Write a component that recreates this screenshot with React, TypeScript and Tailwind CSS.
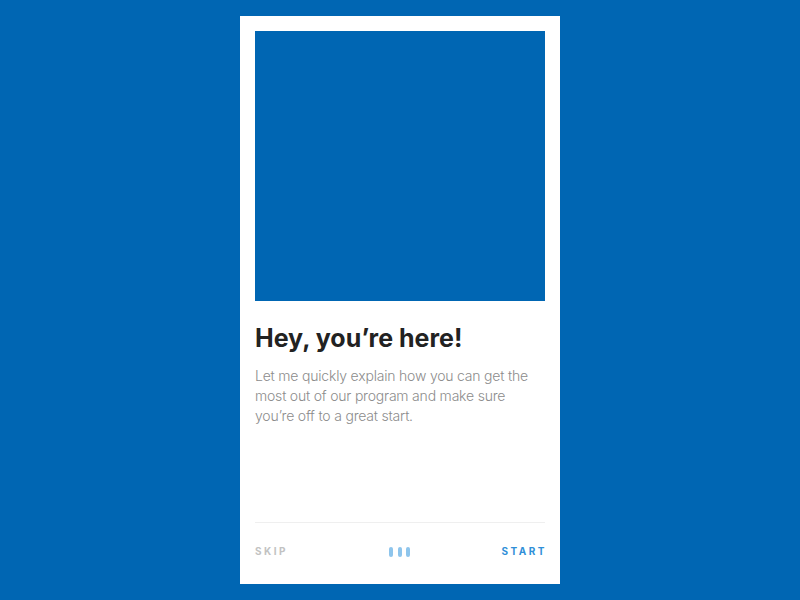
import React from "react";

export default function App() {
  return (
    <div
      className="w-[800px] h-[600px] bg-[#0066b3] pt-4"
      style={{ fontFamily: "Inter, 'Noto Sans', sans-serif" }}
    >
      <div className="mx-auto w-[320px] h-[568px] bg-white px-[15px] pt-[15px] pb-[4px] flex flex-col">
        <div className="h-[270px] bg-[#0066b3]" />
        <h1 className="mt-[21px] text-[25px] leading-[32px] font-bold text-[#222222]">
          Hey, you’re here!
        </h1>
        <p className="mt-[12px] max-w-[280px] text-[14px] leading-[20px] font-light tracking-[-0.2px] text-[#8c8c8c]">
          Let me quickly explain how you can get the most out of our program and make sure you’re off to a great start.
        </p>
        <div className="flex-1" />
        <div className="border-t border-[#efefef] h-[58px] flex items-center justify-between">
          <span className="text-[10px] font-bold tracking-[2.5px] text-[#c2c2c2]">SKIP</span>
          <div className="flex gap-[4.7px] ml-[10px]">
            <span className="w-[4px] h-[10px] rounded-full bg-[#8ec5ec]" />
            <span className="w-[4px] h-[10px] rounded-full bg-[#8ec5ec]" />
            <span className="w-[4px] h-[10px] rounded-full bg-[#8ec5ec]" />
          </div>
          <span className="text-[10px] font-bold tracking-[2.5px] text-[#2f8fd8] -mr-[2px]">START</span>
        </div>
      </div>
    </div>
  );
}
